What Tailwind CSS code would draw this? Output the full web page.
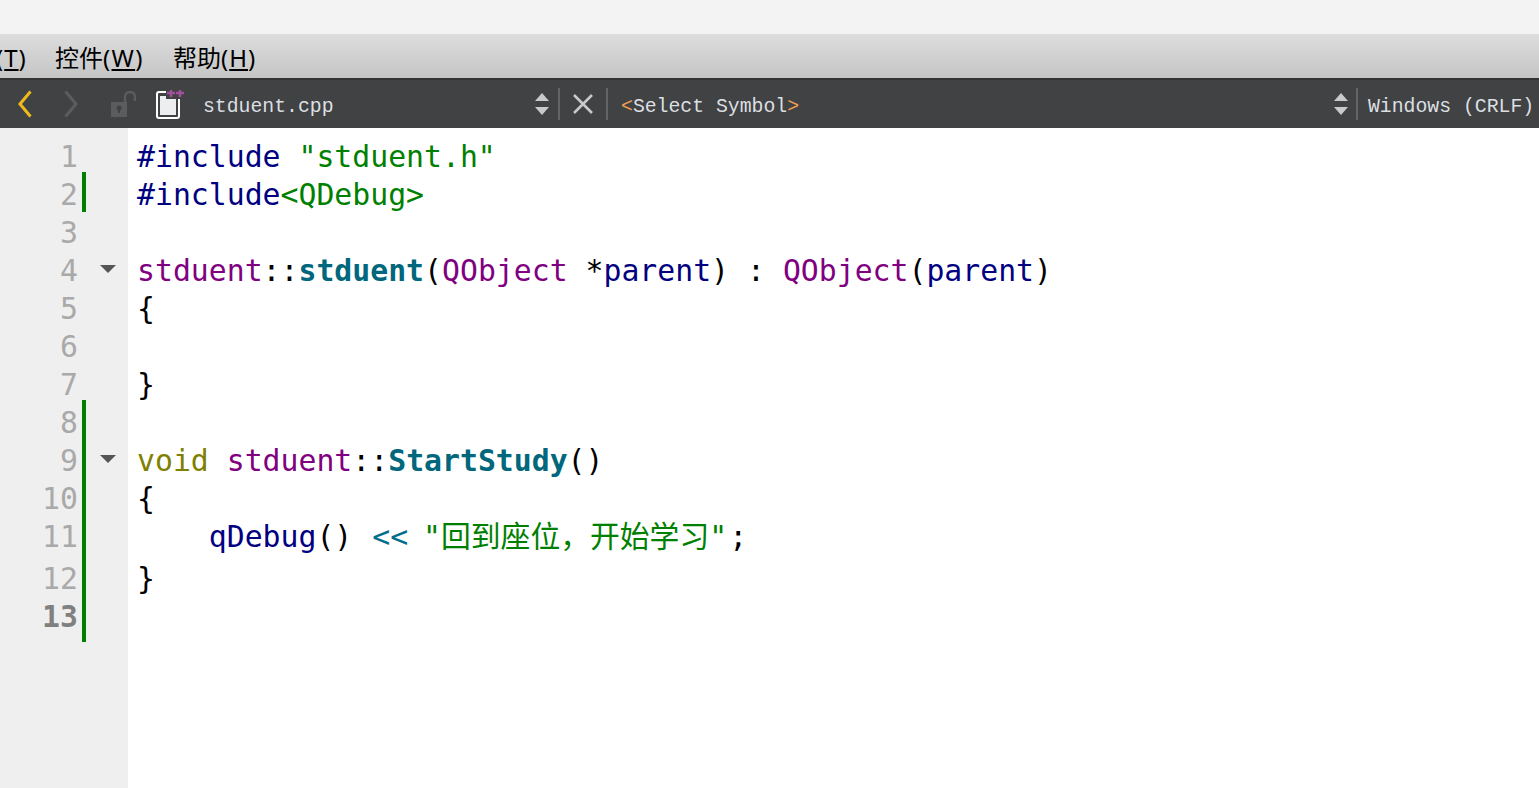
<!DOCTYPE html>
<html lang="en">
<head>
    <meta charset="UTF-8">
    <title>stduent.cpp</title>
    <script src="https://cdn.jsdelivr.net/npm/@tailwindcss/browser@4"></script>
</head>
<body class="bg-white h-[788px] w-[1539px] overflow-hidden flex flex-col">
    <!-- window top strip -->
    <div class="h-[34px] bg-[#f3f3f3]"></div>

    <!-- menu bar -->
    <nav class="h-[44px] pt-[3px] bg-gradient-to-b from-[#dddddd] to-[#c5c5c5] flex items-center text-[24px] text-black font-['Noto_Sans','Noto_Sans_CJK_SC',sans-serif]">
        <span class="w-[59px] shrink-0 -ml-[4px] whitespace-nowrap tracking-[1px]">(<u>T</u>)</span>
        <span class="w-[118px] shrink-0 whitespace-nowrap">控件<span class="tracking-[1.3px]">(<u>W</u>)</span></span>
        <span class="whitespace-nowrap">帮助<span class="tracking-[1px]">(<u>H</u>)</span></span>
    </nav>

    <!-- editor toolbar -->
    <div class="h-[50px] bg-[#404244] border-t-2 border-[#333436] flex items-center font-['Liberation_Mono','Noto_Sans_CJK_SC',monospace] text-[19.8px] text-[#dcdfe2]">
        <svg class="ml-[18px] w-[14px] h-[28px]" viewBox="0 0 14 28" fill="none" stroke="#f0b91c" stroke-width="3"><path d="M12.500 1.500 2 14l10.500 12.500"/></svg>
        <svg class="ml-[32px] w-[14px] h-[28px]" viewBox="0 0 14 28" fill="none" stroke="#5a5c5e" stroke-width="3"><path d="M1.500 1.500 12 14 1.500 26.500"/></svg>
        <svg class="ml-[32px] w-[26px] h-[26px]" viewBox="0 0 26 26">
            <path d="M15 11V6a5 5 0 0 1 10 0v4" fill="none" stroke="#5a5c5e" stroke-width="2.500"/>
            <path d="M1 11h16v15H1z" fill="#5a5c5e"/>
            <circle cx="9" cy="17" r="2.500" fill="#404244"/>
            <path d="M8 18h2v4H8z" fill="#404244"/>
        </svg>
        <svg class="ml-[19px] w-[30px] h-[30px]" viewBox="0 0 30 30">
            <path d="M2 5q0-2 2-2h18q2 0 2 2v22q0 2-2 2H4q-2 0-2-2z" fill="none" stroke="#fff" stroke-width="2"/>
            <path d="M5 7h12l4 3v16H5z" fill="#eceef0"/>
            <path d="M11 0h19v10H11z" fill="#404244"/>
            <path d="M12 4h8M16 1v7M21 4h8M25 1v7" stroke="#a2509e" stroke-width="2.500"/>
        </svg>
        <span class="ml-[18px] mt-[7px] w-[332px] shrink-0">stduent.cpp</span>
        <svg class="w-[14px] h-[22px]" viewBox="0 0 14 22" fill="#c8cacc"><path d="M7 0l7 8H0zM7 22l7-8H0z"/></svg>
        <span class="ml-[9px] w-[2px] h-[32px] bg-[#626466]"></span>
        <svg class="ml-[13px] w-[20px] h-[20px]" viewBox="0 0 20 20" stroke="#c8cacc" stroke-width="2.500"><path d="M1 1l18 18M19 1 1 19"/></svg>
        <span class="ml-[13px] w-[2px] h-[32px] bg-[#626466]"></span>
        <span class="ml-[13px] mt-[7px] w-[713px] shrink-0"><span class="text-[#f0a050]">&lt;</span>Select Symbol<span class="text-[#f0a050]">&gt;</span></span>
        <svg class="w-[14px] h-[22px]" viewBox="0 0 14 22" fill="#c8cacc"><path d="M7 0l7 8H0zM7 22l7-8H0z"/></svg>
        <span class="ml-[8px] w-[2px] h-[32px] bg-[#626466]"></span>
        <span class="ml-[10px] mt-[7px] whitespace-nowrap">Windows (CRLF)</span>
    </div>

    <!-- editor -->
    <div class="flex-1 flex min-h-0 font-['DejaVu_Sans_Mono','Noto_Sans_CJK_SC',monospace] text-[29.8px]">
        <!-- gutter -->
        <div class="w-[128px] shrink-0 bg-[#efefef] flex text-[#a9a9a9]">
            <div class="w-[78px] shrink-0 pt-[10px] text-right [&>div]:h-[38px] [&>div]:leading-[38px]">
                <div>1</div>
                <div>2</div>
                <div>3</div>
                <div>4</div>
                <div>5</div>
                <div>6</div>
                <div>7</div>
                <div>8</div>
                <div>9</div>
                <div>10</div>
                <div>11</div>
                <div class="!h-[42px] !leading-[46px]">12</div>
                <div class="font-bold text-[#808080]">13</div>
            </div>
            <div class="ml-[4px] w-[4px]">
                <div class="mt-[44px] h-[40px] bg-[#008000]"></div>
                <div class="mt-[188px] h-[242px] bg-[#008000]"></div>
            </div>
            <div class="ml-[14px] w-[16px]">
                <div class="mt-[137px] w-0 h-0 border-x-[8px] border-x-transparent border-t-[8px] border-t-[#555555]"></div>
                <div class="mt-[182px] w-0 h-0 border-x-[8px] border-x-transparent border-t-[8px] border-t-[#555555]"></div>
            </div>
        </div>
        <!-- code -->
        <div class="pl-[9px] pt-[10px] text-black [&>div]:h-[38px] [&>div]:leading-[38px] [&>div]:whitespace-pre">
            <div class="text-[#000080]">#include <span class="text-[#008000]">"stduent.h"</span></div>
            <div class="text-[#000080]">#include<span class="text-[#008000]">&lt;QDebug&gt;</span></div>
            <div></div>
            <div><span class="text-[#800080]">stduent</span>::<span class="font-bold text-[#00677c]">stduent</span>(<span class="text-[#800080]">QObject</span> *<span class="text-[#000080]">parent</span>) : <span class="text-[#800080]">QObject</span>(<span class="text-[#000080]">parent</span>)</div>
            <div>{</div>
            <div></div>
            <div>}</div>
            <div></div>
            <div><span class="text-[#808000]">void</span> <span class="text-[#800080]">stduent</span>::<span class="font-bold text-[#00677c]">StartStudy</span>()</div>
            <div>{</div>
            <div>    <span class="text-[#000080]">qDebug</span>() <span class="text-[#006e8e] ml-[2px] -mr-[3px]">&lt;&lt;</span> <span class="text-[#008000]">"回到座位，开始学习"</span><span class="ml-[2px]">;</span></div>
            <div class="!h-[42px] !leading-[46px]">}</div>
        </div>
    </div>
</body>
</html>
